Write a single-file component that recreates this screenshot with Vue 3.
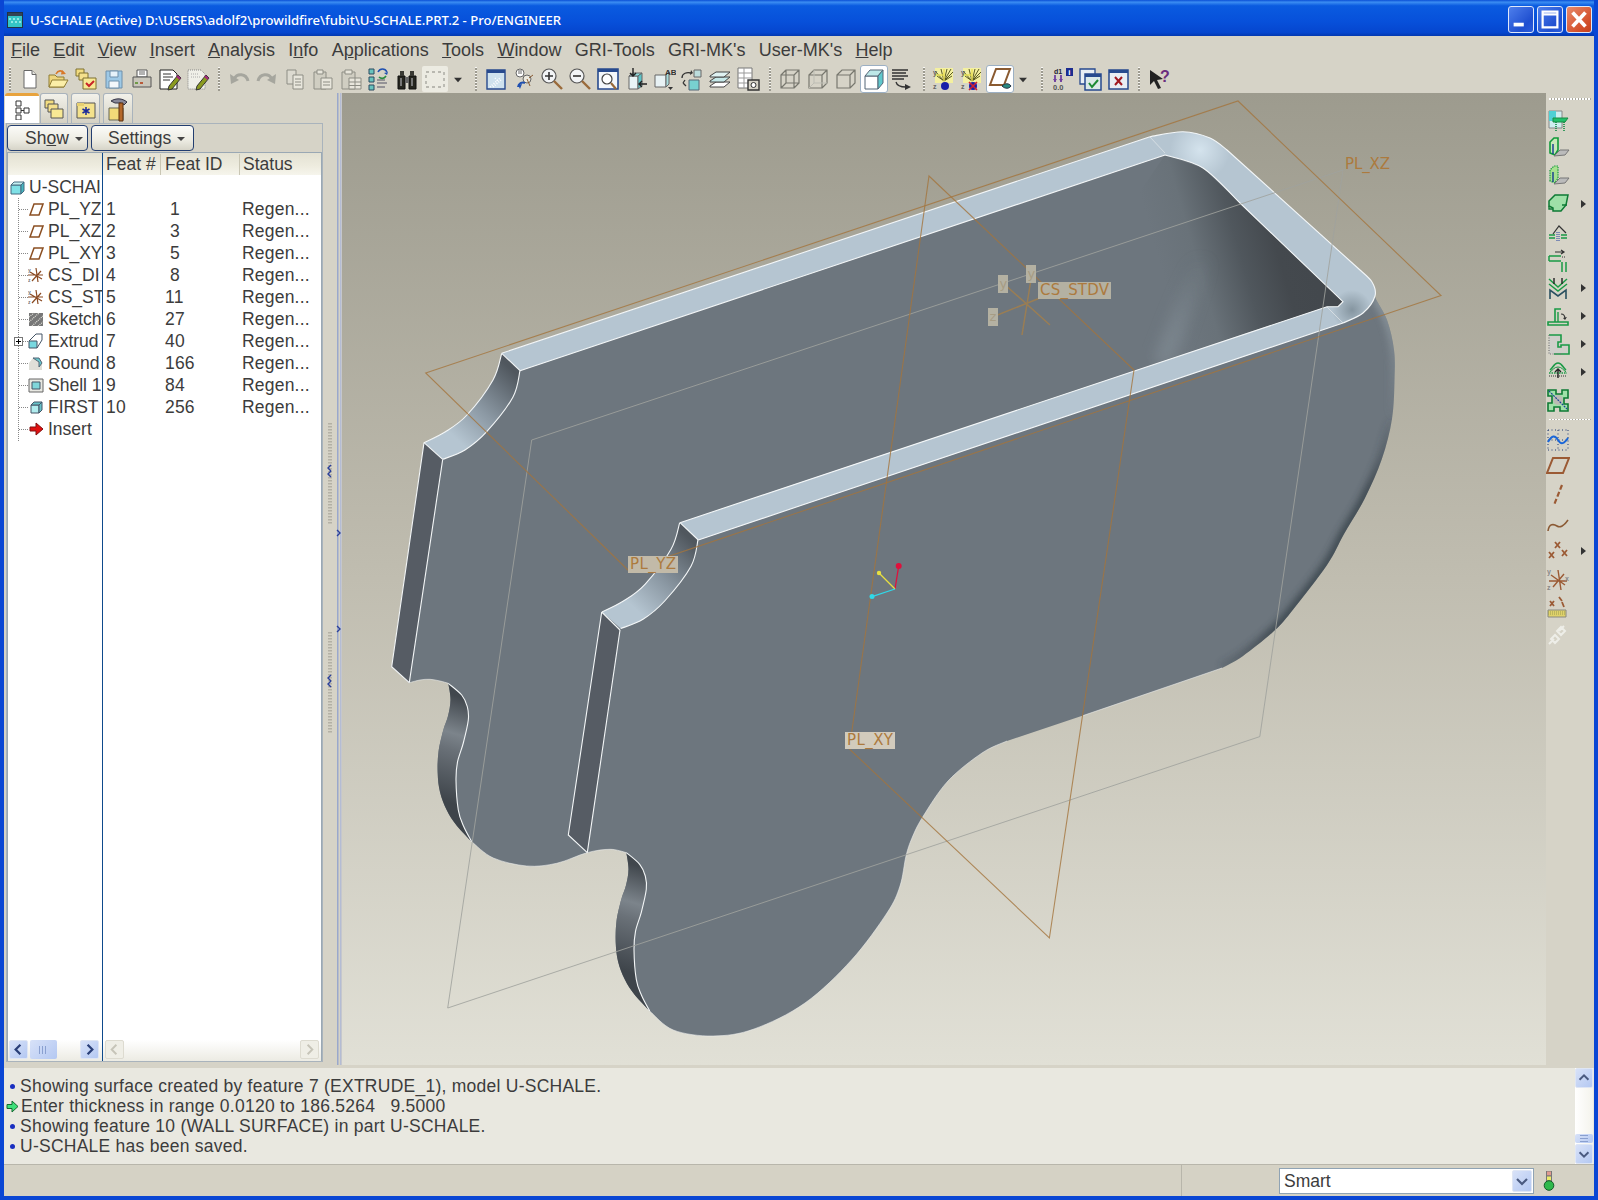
<script setup>
const s = (d, f = 'none', st = 'none', w = 1, da = '') => ({ d, f, st, w, da })
const tx = (t, x, y, size, f = '#222') => ({ t, x, y, size, f })

const cr = (p) => {
  let d = ''
  for (let i = 0; i < p.length - 1; i++) {
    const a = p[i - 1] || p[i], b = p[i], c = p[i + 1], e = p[i + 2] || c
    d += `C${(b[0] + (c[0] - a[0]) / 6).toFixed(1)} ${(b[1] + (c[1] - a[1]) / 6).toFixed(1)} ${(c[0] - (e[0] - b[0]) / 6).toFixed(1)} ${(c[1] - (e[1] - b[1]) / 6).toFixed(1)} ${c[0]} ${c[1]}`
  }
  return d
}
const rev = (p) => [...p].reverse()
const sh = (p, x, y) => p.map((q) => [+(q[0] + x).toFixed(1), +(q[1] + y).toFixed(1)])

const a1o = [[501.7, 353.3], [493, 380], [467, 415], [445, 432], [424, 442.7]]
const a1i = [[520, 370.7], [513, 397], [486.7, 431.7], [465, 450], [442.7, 459.3]]
const a2o = sh(a1o, 178, 169.3)
const a2i = sh(a1i, 178, 169.3)
const b1o = [[448.3, 683.3], [450.5, 700], [448, 716], [443.3, 730], [438.5, 752], [437.7, 773], [440, 792], [446.7, 810], [457, 826], [471.7, 841.7]]
const b1i = [[448.3, 683.3], [461.7, 695], [467.3, 706.7], [468.3, 720], [463.3, 743], [457.5, 762], [456, 780], [458.3, 810], [463.5, 826], [471.7, 841.7]]
const b2o = sh(b1o, 178, 169.3)
const b2i = sh(b1i, 178, 169.3)
const corner1 = [[1150, 136.7], [1183, 131.7], [1210, 138], [1227, 150]]
const rightEdge = [[1360, 270], [1372, 282], [1375, 297], [1387, 320], [1394, 350], [1394.5, 379.5], [1392, 419], [1382, 458.6], [1365, 498], [1344, 534], [1327, 565], [1293.5, 609], [1274.5, 630.6], [1243, 656], [1222, 668]]
const lowerCurve = [[1007, 741], [982, 753], [948, 781], [923, 816.5], [912, 838], [906, 856], [900, 886], [887, 913], [851.5, 960], [805, 1003], [754, 1029], [713, 1036], [673.3, 1030], [649.7, 1011]]
const betweenTabs = [[626.3, 852.6], [610, 849.3], [587, 852.7], [556.7, 863.3], [526.7, 866], [493.3, 858], [471.7, 841.7]]
const bump1 = [[448.3, 683.3], [440, 681], [430, 679.3], [420, 680], [409.3, 682.7]]
const corner2 = [[1360, 270], [1372, 282], [1375, 296], [1363, 313], [1343, 323]]
const innerCorner = [[1240, 203], [1203, 168], [1165, 155]]

const silhouette = `M501.7 353.3L1150 136.7${cr(corner1)}L1360 270${cr(rightEdge)}L1083 715.6L1007 741${cr(lowerCurve)}${cr(rev(b2o))}${cr(betweenTabs)}${cr(rev(b1o))}${cr(bump1)}L391.7 666.7L424 442.7${cr(rev(a1o))}Z`
const rim = `M501.7 353.3L1150 136.7${cr(corner1)}L1360 270${cr(corner2)}L698.3 540L680 522.7L1327 306.7L1338 306.7L1343 301.7L1240 203${cr(innerCorner)}L520 370.7Z`
const cavity = 'M1165 155L1203 168L1240 203L1343 301.7L1338 306.7L1327 306.7L1150 365L1100 250Z'
const band = (o, i) => `M${o[0]}${cr(o)}L${i[i.length - 1]}${cr(rev(i))}Z`
const arc1 = band(a1o, a1i)
const arc2 = band(a2o, a2i)
const dark1 = `M${b1o[0]}${cr(b1o)}${cr(rev(b1i))}Z`
const dark2 = `M${b2o[0]}${cr(b2o)}${cr(rev(b2i))}Z`
const whiteEdges = [
  `M${a1i[0]}${cr(a1i)}`, `M${a1o[0]}${cr(a1o)}`, `M${a2i[0]}${cr(a2i)}`, `M${a2o[0]}${cr(a2o)}`,
  `M${b1i[0]}${cr(b1i)}`, `M${b2i[0]}${cr(b2i)}`,
  'M501.7 353.3L520 370.7', 'M680 522.7L698.3 540', 'M424 442.7L442.7 459.3', 'M601.7 612L620 630',
  'M442.7 459.3L409.3 682.7', 'M424 442.7L391.7 666.7L409.3 682.7', 'M620 630L587.3 852.7', 'M601.7 612L568.3 835L587.3 852.7',
  'M520 370.7L1165 155', `M1240 203${cr(innerCorner)}`, 'M1240 203L1343 301.7L1338 306.7L1327 306.7L680 522.7',
  'M698.3 540L1343 323', 'M501.7 353.3L1150 136.7', `M1150 136.7${cr(corner1)}L1360 270${cr(corner2)}`
]
const softEdges = ['M1150 137L1165 153', 'M1327 307L1343 323', 'M1083 715.6L1222 668', `M${lowerCurve[0]}${cr(lowerCurve)}`, `M${betweenTabs[0]}${cr(betweenTabs)}`, `M${bump1[0]}${cr(bump1)}`]
const darkEdge = `M${rightEdge[6]}${cr(rightEdge.slice(6))}`
const lightEdge = `M${rightEdge[2]}${cr(rightEdge.slice(2, 7))}`
const labels = [
  { x: 628, y: 556, w: 50, h: 17, t: 'PL_YZ', bg: '#c2baa8' },
  { x: 845, y: 732, w: 50, h: 17, t: 'PL_XY', bg: '#d2cbbc' },
  { x: 1038, y: 282, w: 73, h: 17, t: 'CS_STDV', bg: '#b4b1a2' },
  { x: 1343, y: 156, w: 49, h: 17, t: 'PL_XZ', bg: 'none' }
]
const axes = [
  { x: 1026, y: 265, t: 'y' },
  { x: 998, y: 275, t: 'y' },
  { x: 988, y: 308, t: 'z' }
]

const burst = 'M9 2l3 12M15 2l-3 12M19 2l-7 12M3 4l9 10M21 5l-9 9M5 9l7 5M20 9l-8 5'
const I = {
  new: [s('M6 3.5h8l4 4V21H6z', '#fff', '#666'), s('M14 3.5V7.5h4', '#e6e6e0', '#666')],
  open: [s('M3 20V8h6l2 2h7v10z', '#eed67e', '#8f7c34'), s('M3 20l3-7h16l-4 7z', '#fbeea8', '#8f7c34'), s('M10 7c2-4 6-4 8-1', 'none', '#d8782a', 1.6), s('M16 3l4 4-5 .5z', '#d8782a')],
  fcheck: [s('M2 2h8v7H2z', '#f2dc80', '#7f7030'), s('M5 6h9v7H5z', '#f5e08c', '#7f7030'), s('M9 11h13v11H9z', '#f8e994', '#7f7030'), s('M12 16l3 3 5-5', 'none', '#c8242a', 2)],
  save: [s('M4 4h16v17H4z', '#9ec9e6', '#6f90ab'), s('M8 4h8v6H8z', '#e6f2fa', '#6f90ab'), s('M7 14h10v7H7z', '#f4f8fb', '#6f90ab')],
  print: [s('M7 3h10v7H7z', '#fff', '#555'), s('M9 5h6M9 7h6', 'none', '#666'), s('M3 10h18v10H3z', '#c9c6bb', '#555'), s('M5 15h3v2H5z', '#6f9a48'), s('M10 15h3v2h-3z', '#b85a3a')],
  edit: [s('M2 3h13l4 4v15H2z', '#fff', '#222'), s('M5 7h8M5 10h10M5 13h7', 'none', '#333'), s('M11 19L20 8l3 3-9 11-4 1z', '#8a9a20', '#333'), s('M19 9l3 3', 'none', '#a0287a', 2.4)],
  editd: [s('M2 3h13l4 4v15H2z', '#efefe8', '#888', 1, '1 1'), s('M5 7h8M5 10h10', 'none', '#aaa', 1, '1 1'), s('M11 19L20 8l3 3-9 11-4 1z', '#8a9a20', '#333'), s('M19 9l3 3', 'none', '#a0287a', 2.4)],
  undo: [s('M7 12c3-6 12-6 14 2', 'none', '#a6a69e', 3), s('M3 7l1 10 8-4z', '#a6a69e')],
  redo: [s('M17 12c-3-6-12-6-14 2', 'none', '#a6a69e', 3), s('M21 7l-1 10-8-4z', '#a6a69e')],
  copy: [s('M4 3h9v14H4z', '#dcdad0', '#8d8d84'), s('M10 8h10v14H10z', '#e8e6dc', '#8d8d84'), s('M12 12h6M12 15h6M12 18h6', 'none', '#8d8d84')],
  paste: [s('M3 5h12v17H3z', '#d0cec2', '#8d8d84'), s('M6 3h6v4H6z', '#e8e6dc', '#8d8d84'), s('M10 11h11v11H10z', '#e8e6dc', '#8d8d84'), s('M12 15h7M12 18h7', 'none', '#8d8d84')],
  pastet: [s('M3 5h13v17H3z', '#d0cec2', '#8d8d84'), s('M6 3h7v4H6z', '#e8e6dc', '#8d8d84'), s('M10 11h12v11H10z', '#e8e6dc', '#8d8d84'), s('M10 15h12M10 18.5h12M16 11v11', 'none', '#8d8d84')],
  treeswap: [s('M2 2h5v5H2zM2 10h5v5H2zM2 18h5v5H2z', '#68c4be', '#2c4a60'), s('M10 13h8M10 16h10M10 20h8', 'none', '#556'), s('M11 5c2-4 7-4 9 0', 'none', '#2050b0', 1.6), s('M20 8l-3-2 4-1z', '#2050b0'), s('M19 9c-2 3-5 3-7 1', 'none', '#2a8a40', 1.6)],
  binoc: [s('M3 9h7v13H3zM14 9h7v13h-7z', '#26261f', '#111'), s('M5 4h4v5H5zM15 4h4v5h-4z', '#3a3a34'), s('M10 10h4v6h-4z', '#666'), s('M5 11h2v8H5zM16 11h2v8h-2z', '#777')],
  selbox: [s('M3 5h18v15H3z', 'none', '#a8a8a0', 1.4, '3 3')],
  wfill: [s('M3 3h18v19H3z', '#cfe2ee', '#274a8e', 1.4), s('M3 3h18v3H3z', '#274a8e'), s('M6 20l10-9M9 20l8-7M11 11l3 3', 'none', '#fff', 1.6, '1 1.4')],
  orient: [s('M8 6m-4 0a4 4 0 1 0 8 0a4 4 0 1 0-8 0', '#fff', '#666'), s('M15 12m-4 0a4 4 0 1 0 8 0a4 4 0 1 0-8 0', '#ece9de', '#666'), s('M6 4h4M6 6h4', 'none', '#666'), s('M17 11l4-3M15 12l3 7', 'none', '#8a5a30'), s('M6 20a5 5 0 0 1 7-4', 'none', '#2050b0', 2), s('M8 22l2-5-4 1z', '#2050b0')],
  zin: [s('M9 9m-7 0a7 7 0 1 0 14 0a7 7 0 1 0-14 0', '#f2f4f6', '#555', 1.2), s('M5 9h8M9 5v8', 'none', '#333', 1.6), s('M14 14l8 8', 'none', '#9a6a3a', 2.4)],
  zout: [s('M9 9m-7 0a7 7 0 1 0 14 0a7 7 0 1 0-14 0', '#f2f4f6', '#555', 1.2), s('M5 9h8', 'none', '#333', 1.6), s('M14 14l8 8', 'none', '#9a6a3a', 2.4)],
  zfit: [s('M2 2h20v20H2z', '#f4f7fb', '#274a8e', 1.6), s('M2 2h20v3H2z', '#274a8e'), s('M11 12m-5 0a5 5 0 1 0 10 0a5 5 0 1 0-10 0', '#fff', '#444', 1.2), s('M15 16l5 6', 'none', '#9a6a3a', 2.2)],
  spin: [s('M5 9h9v13H5z', '#e8f4f6', '#666'), s('M5 9l4-3h9l-4 3z', '#8fdcdc', '#666'), s('M14 9l4-3v13l-4 3z', '#5cc4c8', '#666'), s('M9 1v8M6 6l3 3 3-3', 'none', '#222', 1.4), s('M23 17h-8M18 14l-3 3 3 3', 'none', '#222', 1.4)],
  name: [s('M3 8h11v12H3z', '#e8f2f4', '#666'), s('M14 8l3-3v12l-3 3z', '#a8dcdc', '#666'), tx('AB', 13, 8, 8, '#333'), s('M16 20h5l-2.5 3z', '#333')],
  cubes: [s('M14 3h7v7h-7z', '#bcdcdc', '#666'), s('M9 13h10v10H9z', '#78d0d0', '#567'), s('M2 11c0-5 5-6 9-5', 'none', '#333', 1.3), s('M11 3l2 3-3 2z', '#333'), s('M3 16l3 3M5 13l-2 3', 'none', '#333', 1.3)],
  layers: [s('M2 19l6-4h14l-6 5H2z', '#fff', '#444'), s('M2 14l6-4h14l-6 5H2z', '#c5e8e8', '#444'), s('M2 9l6-4h14l-6 5H2z', '#dff2f2', '#444')],
  sheet: [s('M2 1h14v20H2z', '#fff', '#777'), s('M2 6h14M2 11h14M2 16h14M8 1v20', 'none', '#999'), s('M12 13h11v10H12z', '#d5d2c6', '#333', 1.4), s('M17.5 18m-2.5 0a2.5 2.5 0 1 0 5 0a2.5 2.5 0 1 0-5 0', '#fff', '#333')],
  wire: [s('M3 8h13v13H3zM8 3h13v13H8zM3 8l5-5M16 8l5-5M3 21l5-5M16 21l5-5', 'none', '#77776e', 1.2)],
  wirer: [s('M3 8h13v13H3zM3 8l5-5h13v13l-5 5M16 8l5-5', 'none', '#77776e', 1.2), s('M8 3v13h13M3 21l5-5', 'none', '#bdbdb4', 1)],
  wiren: [s('M3 8h13v13H3zM3 8l5-5h13v13l-5 5M16 8l5-5', 'none', '#77776e', 1.2)],
  shade: [s('M3 9h13v13H3z', '#fff', '#567'), s('M3 9l5-6h13l-5 6z', '#bde8e8', '#567'), s('M16 9l5-6v13l-5 6z', '#5fc8cc', '#567')],
  modellist: [s('M2 3h16M2 6h14M2 9h16M2 12h12', 'none', '#333', 1.3), s('M6 15c1 4 4 5 10 5', 'none', '#333', 1.3), s('M15 17l6 3-6 3z', '#333')],
  csb: [s('M3 1h18v15H3z', '#f4f0a0', 'none'), s(burst, 'none', '#5a5a20', 1), s('M3 8h9M12 2v12', 'none', '#e8df55', 1.4), tx('y', 1, 8, 7, '#666'), tx('z', 1, 22, 7, '#666'), s('M13 19m-4 0a4 4 0 1 0 8 0a4 4 0 1 0-8 0', '#1820a8')],
  csr: [s('M3 1h18v15H3z', '#f4f0a0', 'none'), s(burst, 'none', '#5a5a20', 1), s('M3 8h9M12 2v12', 'none', '#e8df55', 1.4), tx('y', 1, 8, 7, '#666'), tx('z', 1, 22, 7, '#666'), s('M13 19m-4 0a4 4 0 1 0 8 0a4 4 0 1 0-8 0', '#1820a8'), s('M9 15l8 8M17 15l-8 8', 'none', '#d02030', 1.6)],
  pleye: [s('M8 2h14L16 18H2z', 'none', '#8a5a30', 2), s('M14 19c3-3 7-3 9 0c-2 3-6 3-9 0', '#2a8a80', '#234')],
  param: [tx('d1', 4, 7, 7, '#223'), s('M5 8v7M11 8v7', 'none', '#7040a0', 1.8), s('M3 12l2 3 2-3M9 12l2 3 2-3', '#7040a0'), tx('0.0', 3, 23, 7.5, '#555'), s('M16 1h7v8h-7z', '#1c2c90'), tx('i', 18.3, 8, 8, '#fff')],
  wcheck: [s('M2 2h15v15H2z', '#e8eef4', '#274a8e', 1.3), s('M7 7h16v16H7z', '#dbe9e8', '#274a8e', 1.5), s('M7 7h16v3H7z', '#274a8e'), s('M11 16l3 4 6-7', 'none', '#1c8a34', 2)],
  wx: [s('M3 3h19v19H3z', '#e9edf3', '#274a8e', 1.5), s('M3 3h19v3H3z', '#274a8e'), s('M9 10l7 8M16 10l-7 8', 'none', '#a01820', 2)],
  help: [s('M3 3l13 9-6 1 4 8-3 1-4-8-4 4z', '#222'), tx('?', 13, 15, 16, '#6b2d7d')],
  tri: [s('M6 10h12l-6 7z', '#333')],

  r1: [s('M3 3h13v17H3z', '#cfeef0', '#888'), s('M3 3h7v10H3z', '#4fd0d4'), s('M7 10h15l-3 4H7z', '#22c06a', '#1a8a44'), s('M10 14v10M18 14v10', 'none', '#128a44', 1.6, '1 1')],
  r2: [s('M4 17V6l4-4h4v12l-3 5z', '#c8e8b8', '#119a3a', 1.6), s('M7 8v10', 'none', '#123a90', 1.4), s('M8 20l6-6h9l-4 5z', '#bbb', '#777')],
  r3: [s('M4 17V6l4-4h4v12l-3 5z', '#a8e090', '#119a3a', 1.2, '1.4 1'), s('M7 8v10', 'none', '#123a90', 1.4), s('M8 20l6-6h9l-4 5z', '#bbb', '#777')],
  r4: [s('M3 9l6-6h13l-2 10-5 6H7v-3L3 14z', '#9fe0a8', '#0e7a34', 1.5), s('M3 14v3h4M16 13h5', 'none', '#0e7a34', 1.4)],
  r5: [s('M3 15h6M15 15h6M3 18h6M15 18h6', 'none', '#1a9a45', 1.6), s('M7 14l6-8 7 7', 'none', '#333', 1.2), s('M11 12v10M13 12v10', 'none', '#2040a0', 1, '1 1')],
  r6: [s('M3 8h12M3 13h12M3 8v5', 'none', '#1a9a45', 1.5), s('M9 4h9M15 2l3 2-3 2', 'none', '#333', 1.2), s('M20 14v10M16 14v10', 'none', '#1a9a45', 1.5), s('M16 9h4', 'none', '#333', 1, '1 1')],
  r7: [s('M3 3l9 8 9-8M3 8l9 7 9-7', 'none', '#1a9a45', 1.5), s('M8 2v6M16 2v6', 'none', '#222', 1.4), s('M4 23v-9l8 6 8-6v9', 'none', '#2a5060', 1.6)],
  r8: [s('M2 21h20v-3H2zM9 18V5h6', 'none', '#1a9a45', 1.6), s('M12 18V8', 'none', '#1a9a45', 1.4), s('M15 10c3 0 4 2 4 5', 'none', '#333', 1.2), s('M17 14l2 2 2-3z', '#333')],
  r9: [s('M3 3h12v8h8v11H3z', '#cfcfca', 'none'), s('M3 3h12v7h-3v5h3v-2h8v9H8', 'none', '#1a9a45', 1.6), s('M3 3v19h14', 'none', '#777', 1.2, '1 1.5')],
  r10: [s('M3 13h18', 'none', '#1a9a45', 1.4, '1.5 1'), s('M3 16h18', 'none', '#333', 1.2, '1 1'), s('M4 10c3-2 4-7 8-7s5 5 8 7', 'none', '#1a9a45', 1.6), s('M4 12c3-2 4-5 8-5s5 3 8 5', 'none', '#1a9a45', 1), s('M12 10v8M9 12l3-3 3 3', 'none', '#222', 1.4)],
  r11: [s('M2 2h8v4h6V2h6v8h-4v6h4v7h-8v-4H8v4H2v-8h4V8H2z', '#9fe0a8', '#0e7a34', 1.6), s('M12 12m-5 0a5 5 0 1 0 10 0a5 5 0 1 0-10 0', '#bbbbb4'), s('M3 3l18 18', 'none', '#20409a', 1.2, '2 1')],
  r12: [s('M2 3v20M22 3v20M2 3h20M2 23h20M2 13h20M12 3v20', 'none', '#223a70', 1, '1 2.5'), s('M2 15c4-7 7-7 10-2s6 4 10-2', 'none', '#1a66d8', 2)],
  r13: [s('M7 3h16l-6 15H1z', 'none', '#9b5a34', 2)],
  r14: [s('M16 2l-8 20', 'none', '#9b5a34', 2.2, '5 2.5')],
  r15: [s('M2 20c1-8 6-7 9-5s7 0 11-6', 'none', '#8b5a34', 1.6)],
  r16: [s('M9 3l5 6M14 3L9 9M3 13l5 6M8 13l-5 6M16 11l5 6M21 11l-5 6', 'none', '#9b5a34', 1.8)],
  r17: [s('M12 3l3 20M5 8l14 10M18 7L7 20M3 14h18', 'none', '#9b5a34', 1.4), tx('y', 1, 7, 7, '#888'), tx('x', 19, 14, 7, '#888'), tx('z', 1, 23, 7, '#888')],
  r18: [s('M4 6l4 5M8 6l-4 5M13 2l3 4M16 7l2 5', 'none', '#9b5a34', 1.8), s('M2 15h18v7H2z', '#e0d26a', '#8a8a80'), s('M2 17h18M2 19h18', 'none', '#9a9a50', 1, '1 1')],
  r19: [s('M3 21l5-5M9 20l-4-4 4-4 4 4zM15 12l-4-4 4-4 4 4zM13 8l5-5', 'none', '#eeeee8', 2)],

  tcube: [s('M2 6h10v9H2z', '#7fe0e6', '#476a80'), s('M2 6l3-3h10l-3 3z', '#c4f0f2', '#476a80'), s('M12 6l3-3v9l-3 3z', '#45b6c0', '#476a80')],
  tplane: [s('M6 3h9l-4 11H2z', 'none', '#8b4f22', 1.5)],
  tcs: [s('M8 1l2 14M2 5l12 7M13 4L4 14M0 8h15', 'none', '#8a4a22', 1.2), tx('y', 0, 5, 5, '#777'), tx('z', 0, 15, 5, '#777')],
  tsketch: [s('M1 2h14v13H1z', '#777'), s('M1 6l5-4M1 11l10-9M4 15L15 5M10 15l5-4', 'none', '#e4e4dc', 1.2, '1 1')],
  textrude: [s('M1 8h8v7H1z', '#78d8e0', '#456'), s('M1 8l7-7h6v6L9 15', 'none', '#456')],
  tround: [s('M1 15V8l4-5h6l3 4v8z', '#dfdfd8'), s('M5 3h6l3 5-3 4V7z', '#66c8cc', '#567')],
  tshell: [s('M1 2h14v13H1z', '#e8e8e2', '#666'), s('M4 5h8v7H4z', '#80d6da', '#456')],
  tfirst: [s('M3 6h8v8H3z', '#b0ecee', '#456'), s('M3 6l3-3h8l-3 3zM11 6l3-3v8l-3 3z', '#66c2c8', '#456')],
  tinsert: [s('M2 6h6V2l7 6-7 6v-4H2z', '#e01010', '#801010')]
}

const top = [
  { sep: 1 },
  { i: 'new' }, { i: 'open' }, { i: 'fcheck' }, { i: 'save' }, { i: 'print' }, { i: 'edit' }, { i: 'editd' },
  { sep: 1, x: 1 },
  { i: 'undo' }, { i: 'redo' }, { i: 'copy' }, { i: 'paste' }, { i: 'pastet' }, { i: 'treeswap' }, { i: 'binoc' }, { i: 'selbox', hl: 'soft' }, { i: 'tri', small: 1 },
  { sep: 1, x: 3 },
  { i: 'wfill' }, { i: 'orient' }, { i: 'zin' }, { i: 'zout' }, { i: 'zfit' }, { i: 'spin' }, { i: 'name' }, { i: 'cubes' }, { i: 'layers' }, { i: 'sheet' },
  { sep: 1, x: 2 },
  { i: 'wire' }, { i: 'wirer' }, { i: 'wiren' }, { i: 'shade', hl: 'on' }, { i: 'modellist' },
  { sep: 1, x: 2 },
  { i: 'csb' }, { i: 'csr' }, { i: 'pleye', hl: 'on' }, { i: 'tri', small: 1 },
  { sep: 1, x: 4 },
  { i: 'param' }, { i: 'wcheck' }, { i: 'wx' },
  { sep: 1, x: 1 },
  { i: 'help' }
]
const menuItems = [
  { pre: '', u: 'F', post: 'ile' }, { pre: '', u: 'E', post: 'dit' }, { pre: '', u: 'V', post: 'iew' }, { pre: '', u: 'I', post: 'nsert' },
  { pre: '', u: 'A', post: 'nalysis' }, { pre: 'I', u: 'n', post: 'fo' }, { pre: 'A', u: 'p', post: 'plications' }, { pre: '', u: 'T', post: 'ools' },
  { pre: '', u: 'W', post: 'indow' }, { pre: 'GRI-Tools', u: '', post: '' }, { pre: "GRI-MK's", u: '', post: '' }, { pre: "User-MK's", u: '', post: '' }, { pre: '', u: 'H', post: 'elp' }
]
const rows = [
  { ic: 'tplane', n: 'PL_YZ', a: '1', b: '1' }, { ic: 'tplane', n: 'PL_XZ', a: '2', b: '3' }, { ic: 'tplane', n: 'PL_XY', a: '3', b: '5' },
  { ic: 'tcs', n: 'CS_DI', a: '4', b: '8' }, { ic: 'tcs', n: 'CS_ST', a: '5', b: '11' }, { ic: 'tsketch', n: 'Sketch', a: '6', b: '27' },
  { ic: 'textrude', n: 'Extrud', a: '7', b: '40', plus: 1 }, { ic: 'tround', n: 'Round', a: '8', b: '166' }, { ic: 'tshell', n: 'Shell 1', a: '9', b: '84' },
  { ic: 'tfirst', n: 'FIRST', a: '10', b: '256' }, { ic: 'tinsert', n: 'Insert', a: '', b: '' }
]
const messages = [
  { k: 'dot', t: 'Showing surface created by feature 7 (EXTRUDE_1), model U-SCHALE.' },
  { k: 'arrow', t: 'Enter thickness in range 0.0120 to 186.5264   9.5000' },
  { k: 'dot', t: 'Showing feature 10 (WALL SURFACE) in part U-SCHALE.' },
  { k: 'dot', t: 'U-SCHALE has been saved.' }
]
const right1 = [['r1'], ['r2'], ['r3'], ['r4', 1], ['r5'], ['r6'], ['r7', 1], ['r8', 1], ['r9', 1], ['r10', 1], ['r11']]
const right2 = [['r12'], ['r13'], ['r14'], ['r15'], ['r16', 1], ['r17'], ['r18'], ['r19']]
const tabs = ['t1', 't2', 't3', 't4']
</script>

<template>
  <div class="win">
    <header class="title">
      <svg class="appicon" viewBox="0 0 16 16"><rect x=".5" y=".5" width="15" height="15" fill="#35c6c6" stroke="#234"/><rect x="1" y="1" width="14" height="3" fill="#345"/><path d="M2 6h2v2H2zM6 6h2v2H6zM10 6h2v2h-2zM4 9h2v2H4zM8 9h2v2H8zM12 9h2v2h-2z" fill="#8fe8e4"/></svg>
      <span class="title-text">U-SCHALE (Active) D:\USERS\adolf2\prowildfire\fubit\U-SCHALE.PRT.2 - Pro/ENGINEER</span>
      <div class="wbtns">
        <div class="wbtn"><svg viewBox="0 0 26 27"><rect x="5" y="17" width="11" height="4" fill="#fff"/></svg></div>
        <div class="wbtn"><svg viewBox="0 0 26 27"><path d="M5 5h16v17H5z M5 5h16v3H5z" fill="none" stroke="#fff" stroke-width="2.4"/></svg></div>
        <div class="wbtn close"><svg viewBox="0 0 26 27"><path d="M6 6l14 15M20 6L6 21" stroke="#fff" stroke-width="4"/></svg></div>
      </div>
    </header>

    <nav class="menu">
      <span v-for="m in menuItems" :key="m.u + m.pre + m.post" class="mi">{{ m.pre }}<u>{{ m.u }}</u>{{ m.post }}</span>
    </nav>

    <div class="toolbar">
      <template v-for="(b, n) in top" :key="n">
        <i v-if="b.sep" class="tsep" :style="{ marginLeft: 5 + (b.x || 0) + 'px' }"></i>
        <span v-else class="tb" :class="[b.hl, { small: b.small }]">
          <svg viewBox="0 0 24 24" width="24" height="24">
            <template v-for="(p, j) in I[b.i]" :key="j">
              <text v-if="p.t" :x="p.x" :y="p.y" :font-size="p.size" :fill="p.f" class="itxt">{{ p.t }}</text>
              <path v-else :d="p.d" :fill="p.f" :stroke="p.st" :stroke-width="p.w" :stroke-dasharray="p.da" />
            </template>
          </svg>
        </span>
      </template>
    </div>

    <main class="main">
      <aside class="side">
        <div class="tabs">
          <div v-for="(t, n) in tabs" :key="t" class="tab" :class="[t, { active: n === 0 }]">
            <svg v-if="n === 0" viewBox="0 0 16 20" width="16" height="20"><path d="M2 1h5v5H2zM2 8h5v5H2zM2 15h5v5H2zM10 8h5v5h-5zM7 10.5h3" fill="#fff" stroke="#333"/></svg>
            <svg v-else-if="n === 1" viewBox="0 0 22 22" width="22" height="22"><path d="M2 2h9v8H2z" fill="#f2dc80" stroke="#555"/><path d="M5 6h10v8H5z" fill="#f5e08c" stroke="#555"/><path d="M8 11h12v9H8z" fill="#f8e994" stroke="#555"/></svg>
            <svg v-else-if="n === 2" viewBox="0 0 22 22" width="22" height="22"><path d="M2 5h18v15H2z" fill="#f4e28c" stroke="#555"/><path d="M2 5h7v3H2z" fill="#e6cf70"/><path d="M11 9v8M7.500 11l7 4M14.500 11l-7 4" stroke="#1a2a9a" stroke-width="1.500"/></svg>
            <svg v-else viewBox="0 0 24 26" width="24" height="26"><path d="M3 12h14v12H3z" fill="#f2da78" stroke="#665"/><path d="M5 5c5-3 11-3 16 1l-3 3-3-2H9z" fill="#889" stroke="#334"/><path d="M13 7h4v18h-4z" fill="#b4682a" stroke="#5a3010"/></svg>
          </div>
        </div>
        <section class="panel">
          <div class="btns">
            <div class="pbtn show"><span>Sh<u>o</u>w</span><i class="caret"></i></div>
            <div class="pbtn settings"><span>Settin<u>g</u>s</span><i class="caret"></i></div>
          </div>
          <div class="tree">
            <div class="tleft">
              <div class="thead"></div>
              <div class="trow root">
                <svg viewBox="0 0 16 16" width="16" height="16"><path v-for="(p, j) in I.tcube" :key="j" :d="p.d" :fill="p.f" :stroke="p.st" /></svg>
                <span>U-SCHAI</span>
              </div>
              <div class="tlist">
                <div v-for="r in rows" :key="r.n" class="trow">
                  <i class="conn"></i>
                  <i v-if="r.plus" class="plus"></i>
                  <svg viewBox="0 0 16 16" width="16" height="16">
                    <template v-for="(p, j) in I[r.ic]" :key="j">
                      <text v-if="p.t" :x="p.x" :y="p.y" :font-size="p.size" :fill="p.f" class="itxt">{{ p.t }}</text>
                      <path v-else :d="p.d" :fill="p.f" :stroke="p.st" :stroke-width="p.w" :stroke-dasharray="p.da" />
                    </template>
                  </svg>
                  <span>{{ r.n }}</span>
                </div>
              </div>
              <div class="tfill"></div>
              <div class="hs hs-l">
                <i class="sb act"><svg viewBox="0 0 18 18"><path d="M11 4l-5 5 5 5" fill="none" stroke="#2a3f78" stroke-width="2.400"/></svg></i>
                <i class="thumb"></i>
                <i class="sb act last"><svg viewBox="0 0 18 18"><path d="M7 4l5 5-5 5" fill="none" stroke="#2a3f78" stroke-width="2.400"/></svg></i>
              </div>
            </div>
            <div class="tright">
              <div class="thead hcols"><span class="c1">Feat #</span><span class="c2">Feat ID</span><span class="c3">Status</span></div>
              <div class="drow blank"></div>
              <div v-for="r in rows" :key="r.n" class="drow">
                <span class="c1">{{ r.a }}</span>
                <span class="c2" :class="{ one: r.b.length === 1 }">{{ r.b }}</span>
                <span class="c3">{{ r.a ? 'Regen...' : '' }}</span>
              </div>
              <div class="tfill"></div>
              <div class="hs hs-r">
                <i class="sb off"><svg viewBox="0 0 18 18"><path d="M11 4l-5 5 5 5" fill="none" stroke="#c6c4b8" stroke-width="2"/></svg></i>
                <i class="sb off last"><svg viewBox="0 0 18 18"><path d="M7 4l5 5-5 5" fill="none" stroke="#c6c4b8" stroke-width="2"/></svg></i>
              </div>
            </div>
          </div>
        </section>
        <svg class="split" viewBox="0 0 19 972" width="19" height="972">
          <rect x="14" width="1.500" height="972" fill="#9aa8cc"/>
          <rect x="17" width="1.500" height="972" fill="#b4bcd4"/>
          <path d="M6 330v102M8 330v102M6 539v102M8 539v102" stroke="#a8a69a" stroke-width="1.500" stroke-dasharray="1.500 1.500"/>
          <path d="M8 372l-3 3 3 3M8 378l-3 3 3 3M8 582l-3 3 3 3M8 588l-3 3 3 3" fill="none" stroke="#2a3f9a" stroke-width="1.400"/>
          <path d="M14 437l3 3-3 3M14 533l3 3-3 3" fill="none" stroke="#2a3f9a" stroke-width="1.400"/>
        </svg>
      </aside>

      <div class="gfx">
        <svg viewBox="342 93 1204 972" width="1204" height="972" class="gsvg">
          <defs>
            <linearGradient id="arcA" gradientUnits="userSpaceOnUse" x1="512" y1="370" x2="436" y2="450">
              <stop offset="0" stop-color="#50575e"/><stop offset=".45" stop-color="#8b98a3"/><stop offset=".8" stop-color="#b5c5d1"/>
            </linearGradient>
            <linearGradient id="arcB" gradientUnits="userSpaceOnUse" x1="690" y1="539" x2="614" y2="619">
              <stop offset="0" stop-color="#50575e"/><stop offset=".45" stop-color="#8b98a3"/><stop offset=".8" stop-color="#b5c5d1"/>
            </linearGradient>
            <linearGradient id="darkA" gradientUnits="userSpaceOnUse" x1="470" y1="700" x2="440" y2="800">
              <stop offset="0" stop-color="#41474d"/><stop offset=".35" stop-color="#7c848b"/><stop offset=".5" stop-color="#6a7178"/><stop offset="1" stop-color="#3e444a"/>
            </linearGradient>
            <linearGradient id="darkB" gradientUnits="userSpaceOnUse" x1="648" y1="869" x2="618" y2="969">
              <stop offset="0" stop-color="#41474d"/><stop offset=".35" stop-color="#7c848b"/><stop offset=".5" stop-color="#6a7178"/><stop offset="1" stop-color="#3e444a"/>
            </linearGradient>
            <linearGradient id="cav" gradientUnits="userSpaceOnUse" x1="1150" y1="230" x2="1290" y2="190">
              <stop offset="0" stop-color="#6d767e"/><stop offset=".25" stop-color="#697279"/><stop offset=".55" stop-color="#50575d"/><stop offset=".8" stop-color="#44494e"/><stop offset="1" stop-color="#43484d"/>
            </linearGradient>
            <linearGradient id="edgeFade" gradientUnits="userSpaceOnUse" x1="0" y1="415" x2="0" y2="670">
              <stop offset="0" stop-color="#333c44" stop-opacity="0"/><stop offset=".3" stop-color="#333c44"/><stop offset=".85" stop-color="#333c44"/><stop offset="1" stop-color="#333c44" stop-opacity=".2"/>
            </linearGradient>
            <linearGradient id="edgeLight" gradientUnits="userSpaceOnUse" x1="0" y1="300" x2="0" y2="420">
              <stop offset="0" stop-color="#9aa5ac"/><stop offset="1" stop-color="#9aa5ac" stop-opacity="0"/>
            </linearGradient>
            <linearGradient id="streak" gradientUnits="userSpaceOnUse" x1="0" y1="255" x2="0" y2="340">
              <stop offset="0" stop-color="#86929a" stop-opacity="0"/><stop offset="1" stop-color="#86929a"/>
            </linearGradient>
            <radialGradient id="gloss" cx="1200" cy="150" r="30" gradientUnits="userSpaceOnUse">
              <stop offset="0" stop-color="#d4e3ed"/><stop offset="1" stop-color="#d4e3ed" stop-opacity="0"/>
            </radialGradient>
            <radialGradient id="dim" cx="1352" cy="310" r="20" gradientUnits="userSpaceOnUse">
              <stop offset="0" stop-color="#8595a0"/><stop offset="1" stop-color="#8595a0" stop-opacity="0"/>
            </radialGradient>
            <filter id="blur" x="-30%" y="-30%" width="160%" height="160%"><feGaussianBlur stdDeviation="3.500"/></filter>
            <filter id="blur2" x="-100%" y="-30%" width="300%" height="160%"><feGaussianBlur stdDeviation="7"/></filter>
            <clipPath id="body"><path :d="silhouette"/></clipPath>
            <clipPath id="cavclip"><path :d="cavity"/></clipPath>
          </defs>

          <path :d="silhouette" fill="#6d767e"/>
          <g clip-path="url(#body)">
            <path :d="darkEdge" fill="none" stroke="url(#edgeFade)" stroke-width="10" opacity=".75" filter="url(#blur)"/>
            <path :d="lightEdge" fill="none" stroke="url(#edgeLight)" stroke-width="8" opacity=".7" filter="url(#blur)"/>
          </g>
          <path :d="cavity" fill="url(#cav)"/>
          <g clip-path="url(#cavclip)">
            <path d="M1203 255L1162 365" fill="none" stroke="url(#streak)" stroke-width="20" opacity=".55" filter="url(#blur2)"/>
          </g>
          <path :d="rim" fill="#b5c5d1"/>
          <path :d="rim" fill="url(#gloss)"/>
          <path :d="rim" fill="url(#dim)"/>
          <path :d="arc1" fill="url(#arcA)"/>
          <path :d="arc2" fill="url(#arcB)"/>
          <path d="M424 442.700L442.700 459.300L409.300 682.700L391.700 666.700Z" fill="#565c64"/>
          <path d="M601.700 612L620 630L587.300 852.700L568.300 835Z" fill="#565c64"/>
          <path :d="dark1" fill="url(#darkA)"/>
          <path :d="dark2" fill="url(#darkB)"/>
          <path v-for="(d, n) in softEdges" :key="n" :d="d" fill="none" stroke="#eef1f0" stroke-width=".8" opacity=".7"/>
          <path v-for="(d, n) in whiteEdges" :key="'w' + n" :d="d" fill="none" stroke="#f4f7f8" stroke-width="1.100"/>

          <path d="M1343 170L531.700 440L447.700 1008L1259.800 736.600Z" fill="none" stroke="#a0a29e" stroke-width="1" opacity=".85"/>
          <path d="M425.700 373L1238 101L1441 295.500L628 570Z" fill="none" stroke="#a4743c" stroke-width="1.100" opacity=".8"/>
          <path d="M929 176L1134 370L1049.400 938L849.400 749Z" fill="none" stroke="#a4743c" stroke-width="1.100" opacity=".8"/>
          <path d="M1032 273L1022 335M1003 283L1050 325M990 318L1040 298" fill="none" stroke="#a98046" stroke-width="1.500" opacity=".75"/>

          <path d="M895 589L898.700 566" stroke="#e0103c" stroke-width="1.300"/>
          <path d="M895 589L879 573" stroke="#e8e040" stroke-width="1.300"/>
          <path d="M895 589L872 596.600" stroke="#30d8e8" stroke-width="1.300"/>
          <circle cx="898.700" cy="566" r="3" fill="#e0103c"/>
          <circle cx="879" cy="573" r="2.200" fill="#e8e040"/>
          <circle cx="872" cy="596.600" r="2.500" fill="#30d8e8"/>

          <template v-for="l in labels" :key="l.t">
            <rect v-if="l.bg !== 'none'" :x="l.x" :y="l.y" :width="l.w" :height="l.h" :fill="l.bg"/>
            <text :x="l.x + 2" :y="l.y + 13" :textLength="l.w - 4" class="lbl">{{ l.t }}</text>
          </template>
          <template v-for="(a, n) in axes" :key="n">
            <rect :x="a.x" :y="a.y" width="10" height="18" fill="#b4b1a2"/>
            <text :x="a.x + 1.500" :y="a.y + 13" class="lbl ax">{{ a.t }}</text>
          </template>
        </svg>
      </div>

      <div class="rtool">
        <i class="rsep first"></i>
        <div v-for="r in right1" :key="r[0]" class="rb">
          <svg viewBox="0 0 24 24" width="24" height="24"><path v-for="(p, j) in I[r[0]]" :key="j" :d="p.d" :fill="p.f" :stroke="p.st" :stroke-width="p.w" :stroke-dasharray="p.da"/></svg>
          <i v-if="r[1]" class="rarrow"></i>
        </div>
        <i class="rsep"></i>
        <div v-for="r in right2" :key="r[0]" class="rb">
          <svg viewBox="0 0 24 24" width="24" height="24">
            <template v-for="(p, j) in I[r[0]]" :key="j">
              <text v-if="p.t" :x="p.x" :y="p.y" :font-size="p.size" :fill="p.f" class="itxt">{{ p.t }}</text>
              <path v-else :d="p.d" :fill="p.f" :stroke="p.st" :stroke-width="p.w" :stroke-dasharray="p.da"/>
            </template>
          </svg>
          <i v-if="r[1]" class="rarrow"></i>
        </div>
      </div>
    </main>

    <section class="msgs">
      <div class="lines">
        <div v-for="m in messages" :key="m.t" class="line">
          <i v-if="m.k === 'dot'" class="dot"></i>
          <svg v-else class="garrow" viewBox="0 0 13 13" width="13" height="13"><path d="M1 4.500h5V1l6 5.500L6 12V8.500H1z" fill="#3fe07a" stroke="#146a30"/></svg>
          <span>{{ m.t }}</span>
        </div>
      </div>
      <div class="vs">
        <i class="sb act v"><svg viewBox="0 0 18 18"><path d="M4 11l5-5 5 5" fill="none" stroke="#4a5a80" stroke-width="2.200"/></svg></i>
        <span class="vfill"></span>
        <i class="vthumb"></i>
        <i class="sb act v"><svg viewBox="0 0 18 18"><path d="M4 7l5 5 5-5" fill="none" stroke="#4a5a80" stroke-width="2.200"/></svg></i>
      </div>
    </section>

    <footer class="status">
      <div class="sleft"></div>
      <div class="smid"></div>
      <div class="combo">
        <span>Smart</span>
        <i class="sb act cb"><svg viewBox="0 0 18 18"><path d="M4 7l5 5 5-5" fill="none" stroke="#4a5a80" stroke-width="2.200"/></svg></i>
      </div>
      <svg class="light" viewBox="0 0 12 20" width="12" height="20"><rect x="3.500" y="0" width="5" height="5" fill="#e09a90" stroke="#777"/><rect x="3.500" y="5" width="5" height="5" fill="#ecec6a" stroke="#777"/><circle cx="6" cy="14.500" r="4.800" fill="#2fb84c" stroke="#145a2a"/></svg>
    </footer>
  </div>
</template>

<style scoped>
.win { width: 1598px; height: 1200px; box-sizing: border-box; border: solid #0a46d4; border-width: 0 4px 4px; display: flex; flex-direction: column; background: #d6d3c7; font-family: "Liberation Sans", Arial, sans-serif; font-size: 17.5px; color: #3c3c3c; overflow: hidden; }
.title { height: 36px; margin: 0 -4px; flex: none; display: flex; align-items: center; padding: 0 6px 0 7px; background: linear-gradient(#0a4fd6 0, #3b8df2 6%, #0a5be0 16%, #0750da 60%, #0546cf 90%, #0338b0 100%); color: #fff; box-sizing: border-box; }
.appicon { width: 16px; height: 16px; margin-right: 7px; margin-top: 4px; }
.title-text { font-family: "Noto Sans", sans-serif; font-size: 13.1px; font-weight: 500; white-space: pre; flex: 1; padding-top: 4px; }
.wbtns { display: flex; gap: 3px; padding-top: 3px; }
.wbtn { width: 26px; height: 27px; border: 1px solid #dfe8fa; border-radius: 3px; box-sizing: border-box; background: linear-gradient(135deg, #4e7fec, #1f4fd0 70%, #2a5cdc); overflow: hidden; }
.wbtn svg { width: 100%; height: 100%; display: block; }
.wbtn.close { background: linear-gradient(135deg, #e88a6c, #d4512c 70%, #c4401e); }

.menu { height: 29px; flex: none; display: flex; align-items: center; gap: 13.3px; padding-left: 7px; font-size: 18px; white-space: pre; box-sizing: border-box; }

.toolbar { height: 28px; flex: none; display: flex; align-items: center; padding-left: 0; }
.tsep { width: 2px; height: 24px; margin: 0 5px; background: repeating-linear-gradient(#fff 0 1.500px, #8f8d82 1.500px 3px); opacity: .8; flex: none; }
.tb { width: 28px; height: 26px; flex: none; display: flex; align-items: center; justify-content: center; box-sizing: border-box; }
.tb.small { width: 18px; }
.tb.small svg { width: 16px; height: 16px; }
.tb.soft { background: #ecebe2; border-radius: 2px; width: 26px; margin: 0 1px; }
.tb.on { background: #fff; border: 1px solid #9cb0c4; border-radius: 3px; height: 28px; }
.itxt { font-family: "Liberation Sans", sans-serif; font-weight: 700; }

.main { height: 972px; flex: none; display: flex; }
.side { width: 338px; flex: none; position: relative; box-sizing: border-box; padding-left: 2px; padding-right: 19px; }
.split { position: absolute; right: 0; top: 0; }
.tabs { height: 30px; display: flex; gap: 3px; box-sizing: border-box; margin-left: -1px; }
.tab { width: 28px; height: 30px; flex: none; box-sizing: border-box; border: 1px solid #a9b3bc; border-bottom: 0; border-radius: 3px 3px 0 0; background: linear-gradient(#f2f1ea, #d4d1c4); display: flex; align-items: center; justify-content: center; }
.tab.active { width: 34px; border: 0; border-top: 3px solid #e8a33d; background: #fff; margin-right: -2px; }
.tab.t2 { width: 28px; }
.tab.t3 { width: 29px; }
.tab.t4 { width: 30px; }
.panel { width: 317px; height: 939px; box-sizing: border-box; border: 1px solid #a9b3bc; display: flex; flex-direction: column; }
.btns { height: 28px; display: flex; gap: 3px; padding-top: 1px; padding-left: 0; box-sizing: border-box; flex: none; }
.pbtn { height: 26px; box-sizing: border-box; border: 1px solid #233e70; border-radius: 4px; background: linear-gradient(#fbfbf8, #ecebe2 60%, #d6d4c8); display: flex; align-items: center; }
.pbtn.show { width: 81px; padding-left: 17px; }
.pbtn.settings { width: 103px; padding-left: 16px; }
.caret { width: 0; height: 0; border: 4px solid transparent; border-top: 4px solid #444; border-bottom: 0; margin-left: 6px; margin-top: 2px; }
.tree { flex: 1; min-height: 0; display: flex; background: #fff; border: 1px solid #9aa8b4; border-width: 1px 1px 0; }
.tleft { width: 94px; flex: none; display: flex; flex-direction: column; border-right: 1px solid #0e4a8c; overflow: hidden; white-space: nowrap; }
.tright { flex: 1; min-width: 0; display: flex; flex-direction: column; }
.thead { height: 22px; flex: none; background: linear-gradient(#e3e1d3, #eeecdf 60%, #f6f5ec); }
.hcols { display: flex; align-items: center; }
.trow { height: 22px; flex: none; display: flex; align-items: center; position: relative; }
.root { padding-left: 1px; margin-top: 1px; }
.root svg { margin-right: 2px; }
.tlist { border-left: 1px dotted #888; margin-left: 10px; height: 243px; flex: none; }
.conn { width: 9px; flex: none; border-top: 1px dotted #888; }
.trow svg { margin-right: 4px; flex: none; }
.plus { position: absolute; left: -5px; top: 7px; width: 9px; height: 9px; box-sizing: border-box; border: 1px solid #777; background: linear-gradient(#000, #000) center / 5px 1px no-repeat, linear-gradient(#000, #000) center / 1px 5px no-repeat, #fff; }
.tfill { flex: 1; }
.drow { height: 22px; flex: none; display: flex; align-items: center; letter-spacing: .2px; }
.drow.blank { margin-top: 1px; }
.c1 { width: 57px; padding-left: 3px; box-sizing: border-box; flex: none; }
.c2 { width: 79px; padding-left: 5px; box-sizing: border-box; flex: none; }
.c2.one { padding-left: 10px; }
.c3 { flex: 1; padding-left: 3px; white-space: nowrap; }
.hcols .c2 { border-left: 1px solid #c9c6b4; padding-left: 4px; }
.hcols .c3 { border-left: 1px solid #c9c6b4; padding-left: 3px; }
.hs { height: 21px; flex: none; display: flex; align-items: center; padding-bottom: 2px; box-sizing: border-box; background: linear-gradient(#fff, #ecebe3); }
.hs-l { padding-left: 1px; }
.hs-r { padding-left: 2px; justify-content: space-between; padding-right: 2px; }
.sb { width: 19px; height: 19px; flex: none; display: block; box-sizing: border-box; border-radius: 2px; }
.sb svg { width: 100%; height: 100%; display: block; }
.sb.act { background: linear-gradient(135deg, #d8e2f8, #b4c8f2); border: 1px solid #dfe6f4; }
.sb.off { background: #efeee6; border: 1px solid #dddbd0; }
.thumb { width: 27px; height: 19px; margin: 0 23px 0 2px; flex: none; border-radius: 2px; background: repeating-linear-gradient(90deg, #8aa0d0 0 1px, transparent 1px 3px) center / 9px 8px no-repeat, linear-gradient(135deg, #d8e2f8, #b4c8f2); }

.gfx { width: 1204px; height: 972px; flex: none; background: linear-gradient(#9d9b8e, #c0bdb0 50%, #e1e0d6); }
.gsvg { display: block; }
.lbl { font-family: "DejaVu Sans", sans-serif; font-size: 15px; fill: #ac7a3e; }
.ax { font-size: 13px; fill: #a69c84; }

.rtool { width: 48px; flex: none; display: flex; flex-direction: column; align-items: stretch; padding-top: 5px; box-sizing: border-box; }
.rsep { height: 1.500px; margin: 5px 3px 5px 3px; flex: none; background: repeating-linear-gradient(90deg, #fff 0 2px, #a8a69a 2px 3px); }
.rsep.first { margin: 0 3px 6px; }
.rb { height: 28px; flex: none; display: flex; align-items: center; position: relative; }
.rb svg { flex: none; }
.rarrow { width: 0; height: 0; margin-left: 11px; border: 4.500px solid transparent; border-left: 5px solid #333; border-right: 0; }

.msgs { height: 96px; margin-top: 3px; flex: none; display: flex; background: #e9e8e0; border-bottom: 1px solid #b8b6ab; box-sizing: content-box; }
.lines { flex: 1; padding-top: 8px; }
.line { height: 20px; display: flex; align-items: center; white-space: pre; font-size: 17.5px; letter-spacing: .25px; }
.dot { width: 5px; height: 5px; border-radius: 50%; background: #1a2fc0; margin-left: 6px; margin-right: 5px; flex: none; }
.garrow { margin-left: 2px; margin-right: 2px; flex: none; }
.vs { width: 18px; margin-right: 1px; display: flex; flex-direction: column; background: linear-gradient(90deg, #fff, #f4f3ec); }
.sb.v { width: 18px; height: 20px; }
.vfill { flex: 1; }
.vthumb { height: 9px; margin-bottom: 1px; border-radius: 2px; background: repeating-linear-gradient(#8aa0d0 0 1px, transparent 1px 3px) center / 8px 7px no-repeat, linear-gradient(135deg, #d8e2f8, #b4c8f2); }

.status { flex: 1; min-height: 0; display: flex; align-items: center; background: #d5d2c5; }
.sleft { width: 1178px; height: 100%; border-right: 1px solid #b8b6ab; flex: none; box-sizing: border-box; }
.smid { width: 97px; flex: none; }
.combo { width: 255px; height: 26px; margin-top: 1px; flex: none; box-sizing: border-box; border: 1px solid #8fa3b4; background: #fff; display: flex; align-items: center; justify-content: space-between; padding: 0 1px 0 4px; }
.sb.cb { width: 20px; height: 22px; }
.light { margin-left: 9px; flex: none; }
</style>

<style>
html, body { margin: 0; padding: 0; background: #d6d3c7; }
</style>
